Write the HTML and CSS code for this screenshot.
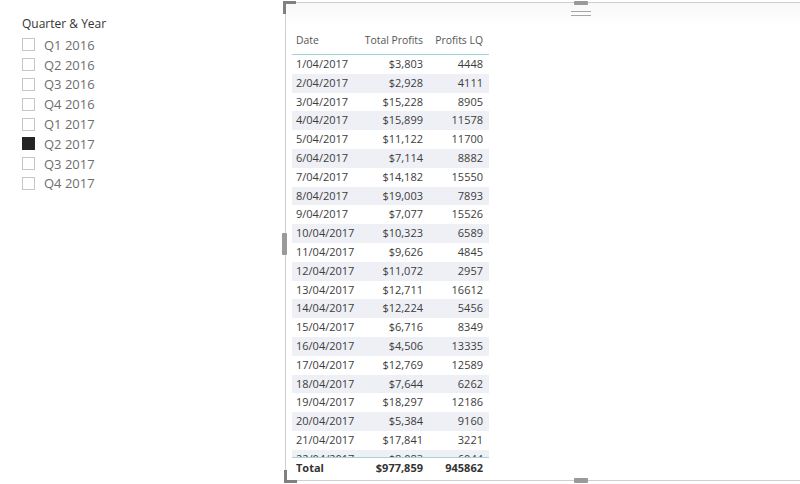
FILE: index.html
```html
<!DOCTYPE html>
<html>
<head>
<meta charset="utf-8">
<link rel="stylesheet" href="styles.css">
</head>
<body>
<div class="page">
  <div class="slicer">
    <div class="slicer-title">Quarter &amp; Year</div>
    <div class="item"><span class="box"></span><span>Q1 2016</span></div>
    <div class="item"><span class="box"></span><span>Q2 2016</span></div>
    <div class="item"><span class="box"></span><span>Q3 2016</span></div>
    <div class="item"><span class="box"></span><span>Q4 2016</span></div>
    <div class="item"><span class="box"></span><span>Q1 2017</span></div>
    <div class="item"><span class="box checked"></span><span>Q2 2017</span></div>
    <div class="item"><span class="box"></span><span>Q3 2017</span></div>
    <div class="item"><span class="box"></span><span>Q4 2017</span></div>
  </div>
  <div class="visual">
    <span class="corner corner-tl"></span>
    <span class="corner corner-bl"></span>
    <span class="handle handle-top"></span>
    <span class="handle handle-bottom"></span>
    <span class="handle handle-left"></span>
    <span class="grip"></span>
    <div class="table">
      <div class="row head">
        <div class="c1">Date</div><div class="c2">Total Profits</div><div class="c3">Profits LQ</div>
      </div>
      <div class="body">
        <div class="row"><div class="c1">1/04/2017</div><div class="c2">$3,803</div><div class="c3">4448</div></div>
        <div class="row alt"><div class="c1">2/04/2017</div><div class="c2">$2,928</div><div class="c3">4111</div></div>
        <div class="row"><div class="c1">3/04/2017</div><div class="c2">$15,228</div><div class="c3">8905</div></div>
        <div class="row alt"><div class="c1">4/04/2017</div><div class="c2">$15,899</div><div class="c3">11578</div></div>
        <div class="row"><div class="c1">5/04/2017</div><div class="c2">$11,122</div><div class="c3">11700</div></div>
        <div class="row alt"><div class="c1">6/04/2017</div><div class="c2">$7,114</div><div class="c3">8882</div></div>
        <div class="row"><div class="c1">7/04/2017</div><div class="c2">$14,182</div><div class="c3">15550</div></div>
        <div class="row alt"><div class="c1">8/04/2017</div><div class="c2">$19,003</div><div class="c3">7893</div></div>
        <div class="row"><div class="c1">9/04/2017</div><div class="c2">$7,077</div><div class="c3">15526</div></div>
        <div class="row alt"><div class="c1">10/04/2017</div><div class="c2">$10,323</div><div class="c3">6589</div></div>
        <div class="row"><div class="c1">11/04/2017</div><div class="c2">$9,626</div><div class="c3">4845</div></div>
        <div class="row alt"><div class="c1">12/04/2017</div><div class="c2">$11,072</div><div class="c3">2957</div></div>
        <div class="row"><div class="c1">13/04/2017</div><div class="c2">$12,711</div><div class="c3">16612</div></div>
        <div class="row alt"><div class="c1">14/04/2017</div><div class="c2">$12,224</div><div class="c3">5456</div></div>
        <div class="row"><div class="c1">15/04/2017</div><div class="c2">$6,716</div><div class="c3">8349</div></div>
        <div class="row alt"><div class="c1">16/04/2017</div><div class="c2">$4,506</div><div class="c3">13335</div></div>
        <div class="row"><div class="c1">17/04/2017</div><div class="c2">$12,769</div><div class="c3">12589</div></div>
        <div class="row alt"><div class="c1">18/04/2017</div><div class="c2">$7,644</div><div class="c3">6262</div></div>
        <div class="row"><div class="c1">19/04/2017</div><div class="c2">$18,297</div><div class="c3">12186</div></div>
        <div class="row alt"><div class="c1">20/04/2017</div><div class="c2">$5,384</div><div class="c3">9160</div></div>
        <div class="row"><div class="c1">21/04/2017</div><div class="c2">$17,841</div><div class="c3">3221</div></div>
        <div class="row alt"><div class="c1">22/04/2017</div><div class="c2">$8,083</div><div class="c3">6044</div></div>
      </div>
      <div class="row total">
        <div class="c1">Total</div><div class="c2">$977,859</div><div class="c3">945862</div>
      </div>
    </div>
  </div>
</div>
</body>
</html>
```

FILE: styles.css
```css
html, body {
  margin: 0;
  padding: 0;
  background: #ffffff;
}
body {
  width: 800px;
  height: 484px;
  overflow: hidden;
  font-family: "Open Sans", "Noto Sans", sans-serif;
}
.page {
  display: flex;
  height: 484px;
}
.slicer {
  width: 285px;
  flex: none;
  padding: 16px 0 0 22px;
  box-sizing: border-box;
}
.slicer-title {
  font-size: 12px;
  line-height: 16px;
  color: #333333;
  margin-bottom: 3px;
}
.item {
  display: flex;
  align-items: center;
  height: 19.8px;
  font-size: 13px;
  color: #6e6e6e;
}
.box {
  width: 11px;
  height: 11px;
  border: 1px solid #c6c6c6;
  margin-right: 9px;
  flex: none;
}
.box.checked {
  background: #252423;
  border-color: #252423;
}
.visual {
  position: relative;
  flex: 1;
  margin-top: 2px;
  height: 479px;
  box-sizing: border-box;
  border-top: 1px solid #cfcfcf;
  border-left: 1px solid #cfcfcf;
  border-bottom: 1px solid #cfcfcf;
  background: linear-gradient(#f8f8f8, #ffffff 24px);
  padding-left: 6px;
}
.corner {
  position: absolute;
  width: 10px;
  height: 10px;
  border-color: #808080;
  border-style: solid;
  border-width: 0;
}
.corner-tl {
  left: -3px;
  top: -2px;
  border-top-width: 3px;
  border-left-width: 3px;
}
.corner-bl {
  left: -2px;
  bottom: -3px;
  border-bottom-width: 3px;
  border-left-width: 3px;
}
.handle {
  position: absolute;
  background: #9a9a9a;
  border-radius: 1px;
}
.handle-top {
  left: 288px;
  top: -2px;
  width: 14px;
  height: 4px;
}
.handle-bottom {
  left: 288px;
  bottom: -3px;
  width: 14px;
  height: 5px;
}
.handle-left {
  left: -4px;
  top: 230px;
  width: 5px;
  height: 22px;
}
.grip {
  position: absolute;
  left: 285px;
  top: 8px;
  width: 20px;
  height: 3px;
  border-top: 1.5px solid #a5a5a5;
  border-bottom: 1.5px solid #a5a5a5;
}
.table {
  width: 197px;
  display: flex;
  flex-direction: column;
  font-size: 11px;
  color: #3c3c3c;
}
.row {
  display: grid;
  grid-template-columns: 66px 69px 62px;
  height: 18.8px;
  line-height: 18.8px;
  white-space: nowrap;
}
.row.alt {
  background: #eef0f5;
}
.c1 {
  padding-left: 4px;
}
.c2 {
  text-align: right;
  padding-right: 4px;
}
.c3 {
  text-align: right;
  padding-right: 6px;
}
.head {
  margin-top: 28px;
  height: 18px;
  line-height: 18px;
  padding-bottom: 5px;
  border-bottom: 1px solid #9fd6d3;
  color: #555555;
  font-size: 10.4px;
}
.body {
  height: 402px;
  overflow: hidden;
}
.total {
  border-top: 1px solid #9fd6d3;
  height: 18px;
  line-height: 18px;
  padding-top: 1px;
  font-weight: 700;
  color: #333333;
}
```
